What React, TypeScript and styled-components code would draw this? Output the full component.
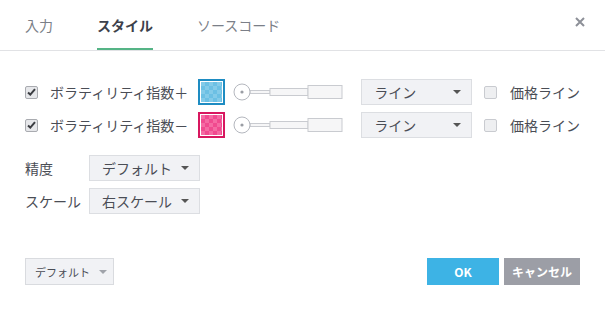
import React from "react";
import styled, { createGlobalStyle } from "styled-components";

const GlobalStyle = createGlobalStyle`
  html, body {
    margin: 0;
    padding: 0;
    background: #fff;
  }
  body {
    font-family: "Noto Sans CJK JP", "Noto Sans", "Liberation Sans", sans-serif;
    color: #4a4d55;
  }
`;

const Dialog = styled.div`
  width: 605px;
  height: 311px;
  display: flex;
  flex-direction: column;
  background: #fff;
`;

const Header = styled.div`
  height: 50px;
  display: flex;
  align-items: stretch;
  padding-left: 25px;
  padding-right: 20px;
  border-bottom: 1px solid #e1e2e5;
  box-sizing: content-box;
`;

const Tab = styled.div<{ $active?: boolean }>`
  display: flex;
  align-items: center;
  margin-right: 44px;
  font-size: 14px;
  font-weight: ${({ $active }) => ($active ? 700 : 400)};
  color: ${({ $active }) => ($active ? "#3d414b" : "#7b7f88")};
  border-bottom: 2px solid ${({ $active }) => ($active ? "#55b486" : "transparent")};
  padding-top: 2px;
  box-sizing: border-box;
`;

const Close = styled.div`
  margin-left: auto;
  display: flex;
  align-items: center;
  padding-bottom: 6px;
`;

const Body = styled.div`
  padding: 28px 25px 0;
  display: flex;
  flex-direction: column;
`;

const PlotRow = styled.div`
  display: flex;
  align-items: center;
  height: 26px;
  margin-bottom: 7px;
`;

const Check = styled.span<{ $checked?: boolean }>`
  width: 11px;
  height: 11px;
  border: 1px solid ${({ $checked }) => ($checked ? "#a9abb0" : "#c9cbd0")};
  border-radius: 2px;
  background: ${({ $checked }) => ($checked ? "#e6e7ea" : "#eeeff1")};
  display: inline-flex;
  align-items: center;
  justify-content: center;
  flex: 0 0 auto;
`;

const Label = styled.span<{ $w?: number }>`
  font-size: 14px;
  color: #4a4d55;
  width: ${({ $w }) => ($w ? `${$w}px` : "auto")};
  flex: 0 0 auto;
  white-space: nowrap;
`;

const Swatch = styled.span<{ $border: string; $a: string; $b: string }>`
  width: 23px;
  height: 22px;
  border: 2px solid ${({ $border }) => $border};
  box-shadow: inset 0 0 0 1px #fff;
  background: repeating-conic-gradient(${({ $a }) => $a} 0 25%, ${({ $b }) => $b} 0 50%) 1px 1px / 8px 8px;
  flex: 0 0 auto;
`;

const Select = styled.div<{ $w: number }>`
  width: ${({ $w }) => $w}px;
  height: 26px;
  box-sizing: border-box;
  background: #f1f2f5;
  border: 1px solid #dcdee2;
  display: flex;
  align-items: center;
  padding: 0 10px 0 12px;
  font-size: 14px;
  color: #4a4d55;
  flex: 0 0 auto;
  white-space: nowrap;
`;

const Arrow = styled.span<{ $color?: string; $gap?: number }>`
  margin-left: ${({ $gap }) => ($gap ? `${$gap}px` : "auto")};
  width: 0;
  height: 0;
  flex: 0 0 auto;
  border-left: 4px solid transparent;
  border-right: 4px solid transparent;
  border-top: 4px solid ${({ $color }) => $color ?? "#555"};
`;

const FieldRow = styled.div`
  display: flex;
  align-items: center;
  height: 26px;
  margin-bottom: 7px;
`;

const Footer = styled.div`
  margin-top: auto;
  padding: 0 25px 26px;
  display: flex;
  align-items: center;
`;

const DefaultBtn = styled.div`
  width: 89px;
  height: 27px;
  box-sizing: border-box;
  background: #f1f2f5;
  border: 1px solid #d9dbdf;
  display: flex;
  align-items: center;
  padding: 0 6px 0 9px;
  font-size: 11px;
  color: #4a4d55;
  white-space: nowrap;
`;

const Button = styled.div<{ $bg: string; $w: number }>`
  width: ${({ $w }) => $w}px;
  height: 27px;
  background: ${({ $bg }) => $bg};
  color: #fff;
  font-size: 12px;
  font-weight: 700;
  display: flex;
  align-items: center;
  justify-content: center;
`;

const Right = styled.div`
  margin-left: auto;
  display: flex;
  gap: 5px;
`;

function CheckMark() {
  return (
    <svg width="9" height="8" viewBox="0 0 9 8">
      <path d="M1 4.5 L3.3 6.6 L8 1.2" stroke="#3b3d42" strokeWidth="2" fill="none" />
    </svg>
  );
}

function Slider() {
  return (
    <svg width="110" height="18" viewBox="0 0 110 18" style={{ flex: "0 0 auto" }}>
      <rect x="17" y="7.5" width="20" height="3" fill="#f6f6f7" stroke="#c9cbd0" />
      <rect x="37" y="5.5" width="38" height="7" fill="#f6f6f7" stroke="#c9cbd0" />
      <rect x="75" y="2.5" width="34" height="13" fill="#f6f6f7" stroke="#c9cbd0" />
      <circle cx="9" cy="9" r="8" fill="#fff" stroke="#b4b7be" />
      <circle cx="9" cy="9" r="1.6" fill="#9a9da4" />
    </svg>
  );
}

function PlotLine({ name, border, a, b }: { name: string; border: string; a: string; b: string }) {
  return (
    <PlotRow>
      <Check $checked>
        <CheckMark />
      </Check>
      <Label $w={148} style={{ marginLeft: 12 }}>
        {name}
      </Label>
      <Swatch $border={border} $a={a} $b={b} />
      <span style={{ width: 8 }} />
      <Slider />
      <span style={{ width: 19 }} />
      <Select $w={111}>
        ライン
        <Arrow />
      </Select>
      <span style={{ width: 12 }} />
      <Check />
      <Label style={{ marginLeft: 13 }}>価格ライン</Label>
    </PlotRow>
  );
}

export default function App() {
  return (
    <>
      <GlobalStyle />
      <Dialog>
        <Header>
          <Tab>入力</Tab>
          <Tab $active>スタイル</Tab>
          <Tab>ソースコード</Tab>
          <Close>
            <svg width="10" height="10" viewBox="0 0 10 10">
              <path d="M1 1 L9 9 M9 1 L1 9" stroke="#8d9098" strokeWidth="2" />
            </svg>
          </Close>
        </Header>
        <Body>
          <PlotLine name="ボラティリティ指数＋" border="#1e8cc2" a="#6cc0e4" b="#84cbe9" />
          <PlotLine name="ボラティリティ指数－" border="#d8175f" a="#f04a8f" b="#f56aa3" />
          <div style={{ height: 10 }} />
          <FieldRow>
            <Label $w={64}>精度</Label>
            <Select $w={111}>
              デフォルト
              <Arrow />
            </Select>
          </FieldRow>
          <FieldRow>
            <Label $w={64}>スケール</Label>
            <Select $w={111}>
              右スケール
              <Arrow />
            </Select>
          </FieldRow>
        </Body>
        <Footer>
          <DefaultBtn>
            デフォルト
            <Arrow $color="#a0a3aa" />
          </DefaultBtn>
          <Right>
            <Button $bg="#3db3e5" $w={72}>OK</Button>
            <Button $bg="#9c9ea6" $w={76}>キャンセル</Button>
          </Right>
        </Footer>
      </Dialog>
    </>
  );
}
